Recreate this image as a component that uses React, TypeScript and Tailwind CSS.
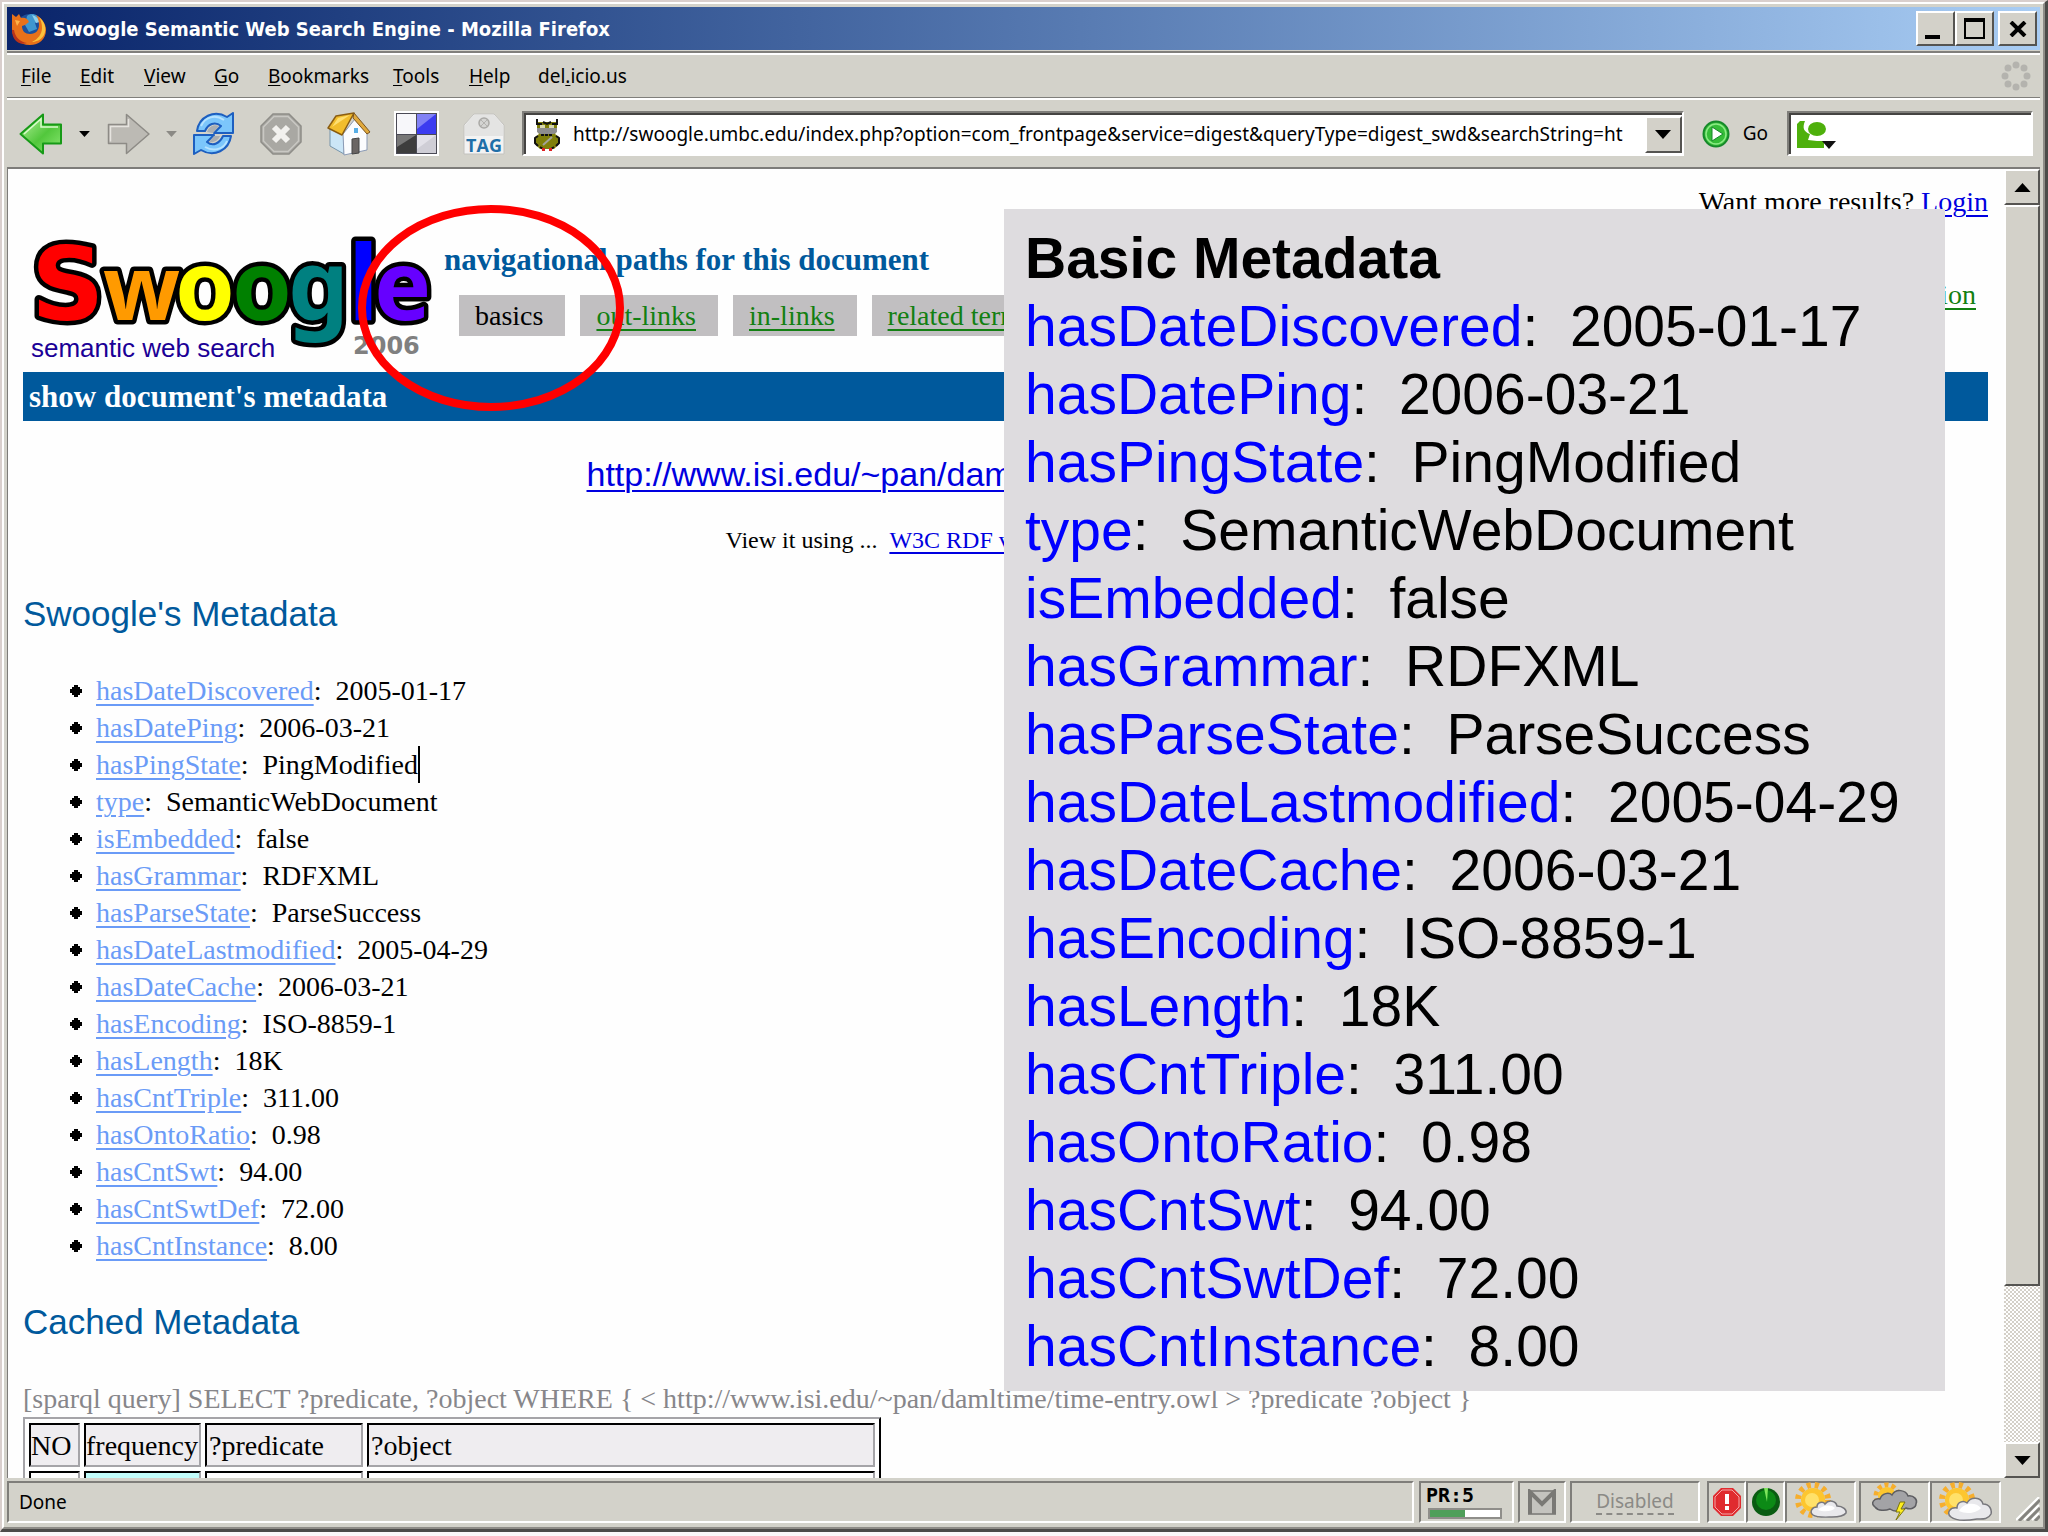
import React from 'react';

const metadata = [
  { name: 'hasDateDiscovered', value: '2005-01-17' },
  { name: 'hasDatePing', value: '2006-03-21' },
  { name: 'hasPingState', value: 'PingModified', caret: true },
  { name: 'type', value: 'SemanticWebDocument' },
  { name: 'isEmbedded', value: 'false' },
  { name: 'hasGrammar', value: 'RDFXML' },
  { name: 'hasParseState', value: 'ParseSuccess' },
  { name: 'hasDateLastmodified', value: '2005-04-29' },
  { name: 'hasDateCache', value: '2006-03-21' },
  { name: 'hasEncoding', value: 'ISO-8859-1' },
  { name: 'hasLength', value: '18K' },
  { name: 'hasCntTriple', value: '311.00' },
  { name: 'hasOntoRatio', value: '0.98' },
  { name: 'hasCntSwt', value: '94.00' },
  { name: 'hasCntSwtDef', value: '72.00' },
  { name: 'hasCntInstance', value: '8.00' },
];

const menus = [
  { before: '', key: 'F', after: 'ile', width: 'w-[59px]' },
  { before: '', key: 'E', after: 'dit', width: 'w-[64px]' },
  { before: '', key: 'V', after: 'iew', width: 'w-[70px]' },
  { before: '', key: 'G', after: 'o', width: 'w-[54px]' },
  { before: '', key: 'B', after: 'ookmarks', width: 'w-[125px]' },
  { before: '', key: 'T', after: 'ools', width: 'w-[76px]' },
  { before: '', key: 'H', after: 'elp', width: 'w-[69px]' },
  { before: 'del', key: '.', after: 'icio.us', width: 'w-[100px]' },
];

const raised =
  'border-2 border-t-white border-l-white border-r-[#555451] border-b-[#555451] bg-[#d3d1c9]';
const sunken =
  'border-2 border-t-[#7f7e7a] border-l-[#7f7e7a] border-r-white border-b-white';

const Arrow = ({ dir, className }: { dir: 'up' | 'down'; className?: string }) => (
  <svg viewBox="0 0 18 10" className={className} aria-hidden="true">
    <path d={dir === 'up' ? 'M0 10 9 0l9 10z' : 'M0 0h18L9 10z'} fill="currentColor" />
  </svg>
);

const FirefoxIcon = () => (
  <svg viewBox="0 0 38 34" className="h-[34px] w-[38px] shrink-0" aria-hidden="true">
    <circle cx="20" cy="16" r="14" fill="#1c4f9c" />
    <path d="M17 4c5-4 11-1 13 3l-5 4 2 6-8 3-4-7z" fill="#3f97cf" />
    <path d="M22 3c4 1 7 4 8 7l-4 1z" fill="#8fd0ea" />
    <path d="M2 2l4 3 3-3 2 4c4-1 7 1 8 4l-4 3-3 1c0 5 3 8 8 8 6 0 9-4 9-9 0-4-1-7-3-10 6 3 10 9 10 15 0 9-7 15-16 15C9 33 2 26 2 17c0-5 0-10 0-15z" fill="#e8711a" />
    <path d="M29 5c6 5 8 12 5 18-3 5-8 7-12 7 6-3 10-8 10-14 0-4-1-8-3-11z" fill="#fbc23c" />
    <path d="M4 18c1 7 6 12 13 13-8 3-15-3-15-13z" fill="#b9331a" />
    <path d="M5 8l5 1-3 5z" fill="#ffb347" />
  </svg>
);

const BackIcon = () => (
  <svg viewBox="0 0 44 42" className="h-[42px] w-[44px]" aria-hidden="true">
    <defs>
      <linearGradient id="back" x1="0" y1="0" x2="1" y2="1">
        <stop offset="0" stopColor="#b9f3a0" />
        <stop offset="0.55" stopColor="#52c73c" />
        <stop offset="1" stopColor="#8be873" />
      </linearGradient>
    </defs>
    <path d="M1.500 21 24 1.500V11.500h18v19H24v10z" fill="url(#back)" stroke="#179a17" strokeWidth="2" strokeLinejoin="round" />
    <path d="M5 21 22 6v8h17" fill="none" stroke="#d9fbcb" strokeWidth="1.500" />
  </svg>
);

const ForwardIcon = () => (
  <svg viewBox="0 0 44 42" className="h-[42px] w-[44px]" aria-hidden="true">
    <path d="M42 21 19.500 1.500V11.500h-18v19h18v10z" fill="#bcbab4" stroke="#8d8b86" strokeWidth="1.500" strokeLinejoin="round" />
    <path d="M3.500 28.500V13.500h18V6" fill="none" stroke="#e6e4df" strokeWidth="1.500" />
  </svg>
);

const ReloadIcon = () => (
  <svg viewBox="0 0 44 44" className="h-11 w-11" aria-hidden="true">
    <path d="M5 19C7 5 22-3 35 5l6-4v20H22l7-7c-6-5-13-2-16 5z" fill="#7cc6fb" stroke="#1d5fc0" strokeWidth="2" strokeLinejoin="round" />
    <path d="M39 24c-2 14-17 22-30 14l-7 4V23h20l-7 7c6 5 13 1 16-6z" fill="#7cc6fb" stroke="#1d5fc0" strokeWidth="2" strokeLinejoin="round" />
    <path d="M9 14c4-9 14-12 23-6M35 29c-3 8-13 11-22 6" fill="none" stroke="#b7e3ff" strokeWidth="2" />
    <path d="M15 20c2-6 7-8 12-6l-6 7zM28 24c-2 5-7 7-11 6l5-6z" fill="#a9aeb3" />
  </svg>
);

const StopIcon = () => (
  <svg viewBox="0 0 42 42" className="h-[42px] w-[42px]" aria-hidden="true">
    <path d="M13 1h16l12 12v16L29 41H13L1 29V13z" fill="#a9a8a3" stroke="#8e8d88" strokeWidth="1.500" />
    <path d="M14 3.500h14L38.500 14v14L28 38.500H14L3.500 28V14z" fill="none" stroke="#c9c8c3" strokeWidth="1.500" />
    <path d="m14 14 14 14m0-14L14 28" stroke="#f2f1ee" strokeWidth="6" />
  </svg>
);

const HomeIcon = () => (
  <svg viewBox="0 0 44 44" className="h-11 w-11" aria-hidden="true">
    <path d="M3 17v17l14 8V20z" fill="#cbe6f7" stroke="#7795ab" />
    <path d="M16 22 28 7l12 14v17l-23 5z" fill="#fbfcfe" stroke="#8b9bb5" />
    <path d="M1 16 9 4l18-3L15 23z" fill="#f2bd2c" stroke="#8a5d13" strokeWidth="1.500" strokeLinejoin="round" />
    <path d="M5 15 11 6l12-3z" fill="#ffdf70" />
    <path d="m27 1 16 19-3 2L26 6z" fill="#e0a93c" stroke="#7b5520" strokeLinejoin="round" />
    <path d="M25 27l7-1v15l-7 1z" fill="#6b6664" stroke="#444" />
    <rect x="27" y="16" width="4" height="5" fill="#57aee6" />
  </svg>
);

const DeliciousIcon = () => (
  <svg viewBox="0 0 45 45" className="h-[45px] w-[45px]" aria-hidden="true">
    <rect width="45" height="45" fill="#fff" />
    <rect x="2" y="2" width="41" height="41" fill="#4a4a55" />
    <rect x="3" y="3" width="19" height="20" fill="#f7f7fa" />
    <rect x="23" y="3" width="19" height="20" fill="#3c3cf0" />
    <path d="M23 3h19L23 18z" fill="#8282f5" />
    <rect x="3" y="24" width="19" height="18" fill="#3d3d3d" />
    <path d="M3 24h19L3 36z" fill="#777" />
    <rect x="23" y="24" width="19" height="18" fill="#cfced6" />
    <path d="M23 24h19L23 38z" fill="#e2e1e8" />
  </svg>
);

const TagIcon = () => (
  <svg viewBox="0 0 42 42" className="h-[42px] w-[42px]" aria-hidden="true">
    <path d="M1 41V12L11 1h20l10 11v29z" fill="#f3f3f3" stroke="#c3c2be" />
    <path d="M2 23V12L11 2h20l9 10v11z" fill="#e4e4e3" />
    <circle cx="21" cy="10" r="5" fill="#d4d4d2" stroke="#aaa9a6" strokeWidth="1.500" />
    <path d="m18 7 6 6m0-6-6 6" stroke="#b3b2af" />
    <text x="21" y="39" textAnchor="middle" fontFamily="Open Sans, sans-serif" fontWeight="700" fontSize="18" fill="#1f6fa8">TAG</text>
  </svg>
);

const OwlIcon = () => (
  <svg viewBox="0 0 26 32" className="h-8 w-[26px] shrink-0" aria-hidden="true">
    <path d="M3 3h20v9l-2 3 4 3v7l-5 5H6l-5-5v-7l4-3-2-3z" fill="#80800a" />
    <path d="M3 0v5h5M23 0v5h-5M9 3l4 2 4-2M4 17l-3 2v5l3 3M22 17l3 2v5l-3 3M6 28l3 2M20 28l-3 2" fill="none" stroke="#111" strokeWidth="2" />
    <path d="M3 9h20v4l-3 2H6l-3-2z" fill="#8d8d8d" />
    <path d="M6 6h5v3H6zM15 6h5v3h-5z" fill="#d8d8b0" />
    <path d="M7 16h12" stroke="#111" strokeWidth="2" strokeDasharray="3 1" />
    <path d="M18 18 9 26" stroke="#a3a39a" strokeWidth="2" />
    <path d="M8 29h3v3H8zM15 29h3v3h-3z" fill="#d22" />
  </svg>
);

const GoIcon = () => (
  <svg viewBox="0 0 28 28" className="h-7 w-7" aria-hidden="true">
    <circle cx="14" cy="14" r="12.500" fill="#35bd38" stroke="#16892a" strokeWidth="2" />
    <circle cx="14" cy="14" r="10" fill="none" stroke="#8ceb86" strokeWidth="1.500" />
    <path d="M10 7v14l11-7z" fill="#fff" stroke="#16892a" />
  </svg>
);

const SearchEngineIcon = () => (
  <svg viewBox="0 0 40 30" className="h-[30px] w-10 shrink-0" aria-hidden="true">
    <path d="M1 4 4 1h5c-3 7-1 11 5 13l-2 6 9 1h7v7H1z" fill="#4eb00c" />
    <ellipse cx="21" cy="9" rx="9" ry="7" fill="#4eb00c" />
    <path d="M26 21h14l-7 8z" fill="#111" />
  </svg>
);

const Throbber = () => (
  <svg viewBox="0 0 30 30" className="h-[30px] w-[30px]" fill="#b4b3ae" aria-hidden="true">
    <circle cx="15" cy="4" r="3.500" />
    <circle cx="23" cy="7" r="3.500" />
    <circle cx="26" cy="15" r="3.500" />
    <circle cx="23" cy="23" r="3.500" />
    <circle cx="15" cy="26" r="3.500" />
    <circle cx="7" cy="23" r="3.500" />
    <circle cx="4" cy="15" r="3.500" />
    <circle cx="7" cy="7" r="3.500" />
  </svg>
);

const Logo = () => (
  <svg viewBox="0 0 415 152" className="h-[152px] w-[415px] shrink-0 overflow-visible" role="img" aria-label="Swoogle semantic web search 2006">
    <g
      fontFamily="Noto Sans, sans-serif"
      fontWeight="700"
      fontSize="96"
      stroke="#000"
      strokeWidth="9"
      strokeLinejoin="round"
      paintOrder="stroke"
    >
      <text x="8" y="100" fontFamily="DejaVu Sans, sans-serif" fontSize="102" fill="#f00">S</text>
      <text x="80" y="100" fontSize="90" fill="#ff9a00">w</text>
      <text x="152" y="100" fill="#ff0">o</text>
      <text x="209" y="100" fill="#008000">o</text>
      <text x="265" y="100" fill="#008080">g</text>
      <text x="325" y="100" fontSize="104" fill="#00f">l</text>
      <text x="351" y="100" fill="#60f">e</text>
    </g>
    <text x="8" y="137" fontFamily="Liberation Sans, sans-serif" fontSize="26" fill="#1b0096">semantic web search</text>
    <text x="330" y="134" fontFamily="DejaVu Sans, sans-serif" fontWeight="700" fontSize="24" fill="#808080">2006</text>
  </svg>
);

const Sun = ({ children, cx }: { children: React.ReactNode; cx: number }) => (
  <svg viewBox="0 0 54 42" className="h-[42px] w-[54px]" aria-hidden="true">
    <circle cx={cx} cy="19" r="15" fill="none" stroke="#f6ae2d" strokeWidth="6" strokeDasharray="4 4" />
    <circle cx={cx} cy="19" r="12" fill="#fdc62f" />
    <circle cx={cx - 1} cy="19" r="7" fill="#ffe169" />
    {children}
  </svg>
);

const TitleBar = () => (
  <header className="flex h-[43px] shrink-0 items-center bg-linear-to-r from-[#0a246a] to-[#a9cdf4] pr-[3px] pl-[3px]">
    <FirefoxIcon />
    <h1 className="ml-[5px] grow font-['DejaVu_Sans_Condensed','DejaVu_Sans',sans-serif] text-[20px] font-bold text-white">
      Swoogle Semantic Web Search Engine - Mozilla Firefox
    </h1>
    <div className="flex">
      <button type="button" aria-label="Minimize" className={`flex h-[35px] w-[39px] items-end pb-[5px] pl-[7px] ${raised}`}>
        <span className="h-1 w-[15px] bg-black" />
      </button>
      <button type="button" aria-label="Maximize" className={`flex h-[35px] w-[39px] items-center justify-center ${raised}`}>
        <span className="h-[21px] w-[21px] border-2 border-t-4 border-black" />
      </button>
      <button type="button" aria-label="Close" className={`ml-1 flex h-[35px] w-[39px] items-center justify-center ${raised}`}>
        <svg viewBox="0 0 18 16" className="h-4 w-[18px]" aria-hidden="true">
          <path d="m2 1 14 14m0-14L2 15" stroke="#000" strokeWidth="4" />
        </svg>
      </button>
    </div>
  </header>
);

const MenuBar = () => (
  <nav className="flex h-[42px] shrink-0 items-center pr-[9px] pl-[14px] text-[19px]">
    {menus.map((menu) => (
      <button key={menu.key} type="button" className={`text-left ${menu.width}`}>
        {menu.before}
        <span className="underline underline-offset-2">{menu.key}</span>
        {menu.after}
      </button>
    ))}
    <span className="ml-auto">
      <Throbber />
    </span>
  </nav>
);

const ToolBar = () => (
  <div className="flex h-[67px] shrink-0 items-center pr-[7px] pl-3">
    <button type="button" aria-label="Back"><BackIcon /></button>
    <button type="button" aria-label="Back history" className="ml-4"><Arrow dir="down" className="h-[6px] w-[11px]" /></button>
    <button type="button" aria-label="Forward" className="ml-[17px]"><ForwardIcon /></button>
    <button type="button" aria-label="Forward history" className="ml-[15px] text-[#8b8a85]"><Arrow dir="down" className="h-[6px] w-[11px]" /></button>
    <button type="button" aria-label="Reload" className="ml-[15px]"><ReloadIcon /></button>
    <button type="button" aria-label="Stop" className="ml-6"><StopIcon /></button>
    <button type="button" aria-label="Home" className="ml-[25px]"><HomeIcon /></button>
    <button type="button" aria-label="del.icio.us" className="ml-[23px]"><DeliciousIcon /></button>
    <button type="button" aria-label="Tag" className="ml-6"><TagIcon /></button>
    <div className={`ml-[17px] flex h-[45px] grow items-center bg-white ${sunken}`}>
      <div className="flex h-full grow items-center border-t-2 border-l-2 border-[#454442] pl-2">
        <OwlIcon />
        <input
          type="text"
          aria-label="Location"
          defaultValue="http://swoogle.umbc.edu/index.php?option=com_frontpage&service=digest&queryType=digest_swd&searchString=ht"
          className="ml-[13px] min-w-0 grow bg-transparent text-[19px] outline-none"
        />
        <button type="button" aria-label="Show history" className={`flex h-[37px] w-[37px] items-center justify-center ${raised}`}>
          <Arrow dir="down" className="h-[9px] w-4" />
        </button>
      </div>
    </div>
    <button type="button" className="ml-[18px] flex items-center gap-[13px] text-[19px]">
      <GoIcon />
      Go
    </button>
    <label className={`ml-[19px] flex h-[45px] w-[246px] items-center bg-white ${sunken}`}>
      <span className="flex h-full grow items-center border-t-2 border-l-2 border-[#454442] pl-[5px]">
        <SearchEngineIcon />
        <input type="text" aria-label="Search" className="w-0 grow bg-transparent text-[19px] outline-none" />
      </span>
    </label>
  </div>
);

const Tab = ({ children }: { children: React.ReactNode }) => (
  <li className="bg-[#c1bfc1] pr-[22px] pl-4 leading-[41px] whitespace-nowrap">{children}</li>
);

const OverlayPanel = () => (
  <aside className="absolute top-10 right-[59px] left-[996px] bg-[#dedcdf] pt-[15px] pb-[11px] pl-[21px] font-['Liberation_Sans',Arial,sans-serif] text-[57px] leading-[68px] whitespace-nowrap">
    <h2 className="font-bold">Basic Metadata</h2>
    {metadata.map((item) => (
      <p key={item.name}>
        <span className="text-[#0000ff]">{item.name}</span>:&nbsp; {item.value}
      </p>
    ))}
  </aside>
);

const Page = () => (
  <main className="relative min-w-0 grow overflow-hidden bg-[#fefefe] pt-[14px] pr-4 pl-[15px] font-['Liberation_Serif','Times_New_Roman',serif] text-[28px] leading-[37px]">
    <p className="text-right">
      Want more results? <a href="#login" className="text-[#0000e0] underline decoration-2 underline-offset-4">Login</a>
    </p>
    <div className="flex">
      <Logo />
      <div className="pt-[22px] pl-[6px]">
        <h2 className="text-[31px] leading-[36px] font-bold text-[#00599c]">navigational paths for this document</h2>
        <ul className="mt-[17px] ml-[15px] flex gap-[15px]">
          <Tab>basics</Tab>
          <Tab><a href="#out" className="text-[#128012] underline decoration-2 underline-offset-4">out-links</a></Tab>
          <Tab><a href="#in" className="text-[#128012] underline decoration-2 underline-offset-4">in-links</a></Tab>
          <Tab><a href="#terms" className="text-[#128012] underline decoration-2 underline-offset-4">related terms</a></Tab>
        </ul>
      </div>
      <a href="#more" className="mt-14 mr-3 ml-auto self-start text-[#128012] underline decoration-2 underline-offset-4">ion</a>
    </div>
    <h2 className="bg-[#00599c] pl-[6px] text-[31px] leading-[49px] font-bold text-white">show document's metadata</h2>
    <div className="mx-auto mt-[29px] w-[838px] font-['Liberation_Sans',Arial,sans-serif] text-[34px] leading-[48px]">
      <a href="#doc" className="text-[#0000e0] underline decoration-2 underline-offset-4">http://www.isi.edu/~pan/damltime/time-entry.owl</a>
    </div>
    <p className="mx-auto mt-[26px] w-[560px] text-[24px] leading-8">
      View it using ... &nbsp;
      <a href="#w3c" className="text-[#0000e0] underline decoration-2 underline-offset-4">W3C RDF validator</a>
    </p>
    <h2 className="mt-[37px] font-['Liberation_Sans',Arial,sans-serif] text-[35px] leading-[42px] text-[#00599c]">Swoogle's Metadata</h2>
    <ul className="mt-[37px] pl-[47px]">
      {metadata.map((item) => (
        <li key={item.name} className="flex items-center">
          <svg viewBox="0 0 12 12" className="mr-[14px] h-3 w-3" aria-hidden="true">
            <path d="M4 0h4v2h2v2h2v4h-2v2H8v2H4v-2H2V8H0V4h2V2h2z" />
          </svg>
          <span className={item.caret ? 'border-r-2 border-black' : ''}>
            <a href={`#${item.name}`} className="text-[#6a9bf7] underline decoration-2 underline-offset-4">{item.name}</a>:&nbsp; {item.value}
          </span>
        </li>
      ))}
    </ul>
    <h2 className="mt-[37px] font-['Liberation_Sans',Arial,sans-serif] text-[35px] leading-[42px] text-[#00599c]">Cached Metadata</h2>
    <p className="mt-[37px] whitespace-nowrap text-[#87868a]">
      [sparql query] SELECT ?predicate, ?object WHERE {'{'} &lt; http://www.isi.edu/~pan/damltime/time-entry.owl &gt; ?predicate ?object {'}'}
    </p>
    <table className="w-[858px] table-fixed border-separate border-spacing-1 border-2 border-t-[#a5a4a8] border-r-black border-b-black border-l-[#a5a4a8]">
      <thead>
        <tr className="bg-[#efedf0] text-left">
          <th className="h-11 w-[51px] border-2 border-t-black border-r-[#a5a4a8] border-b-[#a5a4a8] border-l-black font-normal">NO</th>
          <th className="w-[117px] border-2 border-t-black border-r-[#a5a4a8] border-b-[#a5a4a8] border-l-black font-normal">frequency</th>
          <th className="w-[158px] border-2 border-t-black border-r-[#a5a4a8] border-b-[#a5a4a8] border-l-black pl-[2px] font-normal">?predicate</th>
          <th className="border-2 border-t-black border-r-[#a5a4a8] border-b-[#a5a4a8] border-l-black pl-[2px] font-normal">?object</th>
        </tr>
      </thead>
      <tbody>
        <tr>
          <td className="h-11 border-2 border-t-black border-r-[#a5a4a8] border-b-[#a5a4a8] border-l-black" />
          <td className="border-2 border-t-black border-r-[#a5a4a8] border-b-[#a5a4a8] border-l-black bg-[#c2fdfb]" />
          <td className="border-2 border-t-black border-r-[#a5a4a8] border-b-[#a5a4a8] border-l-black" />
          <td className="border-2 border-t-black border-r-[#a5a4a8] border-b-[#a5a4a8] border-l-black" />
        </tr>
      </tbody>
    </table>
    <svg viewBox="0 0 266 206" className="absolute top-9 left-[350px] h-[206px] w-[266px]" aria-hidden="true">
      <ellipse cx="133" cy="103" rx="129" ry="99" fill="none" stroke="#f00" strokeWidth="8" />
    </svg>
    <OverlayPanel />
  </main>
);

const ScrollBar = () => (
  <div className="flex w-9 shrink-0 flex-col bg-[repeating-conic-gradient(#ffffff_0_25%,#d4d0c8_0_50%)] bg-[length:4px_4px]">
    <button type="button" aria-label="Scroll up" className={`flex h-9 items-center justify-center ${raised}`}>
      <Arrow dir="up" className="h-[9px] w-[17px]" />
    </button>
    <div className={`grow-[1081] ${raised}`} />
    <div className="grow-[157]" />
    <button type="button" aria-label="Scroll down" className={`flex h-9 items-center justify-center ${raised}`}>
      <Arrow dir="down" className="h-[9px] w-[17px]" />
    </button>
  </div>
);

const StatusBar = () => (
  <footer className="flex h-[49px] shrink-0 items-start pt-[3px] text-[19px]">
    <p className={`flex h-[42px] grow items-center pl-[10px] ${sunken}`}>Done</p>
    <div className={`ml-[5px] h-[42px] w-[95px] pl-[5px] ${sunken}`}>
      <p className="font-['DejaVu_Sans_Mono',monospace] text-[20px] leading-6 font-bold">PR:5</p>
      <div className="mt-px ml-[2px] h-[11px] w-[74px] border-2 border-[#8f8e8a] bg-white">
        <div className="h-full w-1/2 bg-[#4f9f5a]" />
      </div>
    </div>
    <div className={`ml-1 flex h-[42px] w-12 items-center justify-center ${sunken}`}>
      <svg viewBox="0 0 30 26" className="h-[26px] w-[30px]" aria-hidden="true">
        <path d="M2 2h26v23H2z" fill="#c4c3be" stroke="#8c8b87" strokeWidth="2" />
        <path d="M3 25V3l12 12L27 3v22" fill="none" stroke="#7a7975" strokeWidth="4" />
      </svg>
    </div>
    <div className={`ml-1 flex h-[42px] w-[130px] items-center justify-center text-[#8b8a86] ${sunken}`}>
      <span className="border-b-2 border-dashed border-[#8b8a86] leading-6">Disabled</span>
    </div>
    <div className={`ml-[7px] flex h-[42px] w-[39px] items-center justify-center ${sunken}`}>
      <svg viewBox="0 0 28 28" className="h-7 w-7" aria-hidden="true">
        <path d="M8 0h12l8 8v12l-8 8H8l-8-8V8z" fill="#e02b2f" />
        <path d="M9 2h10l7 7v10l-7 7H9l-7-7V9z" fill="none" stroke="#f4a6a6" />
        <path d="M12 6h4v10h-4zM12 18h4v4h-4z" fill="#fff" />
      </svg>
    </div>
    <div className={`flex h-[42px] w-[39px] items-center justify-center ${sunken}`}>
      <svg viewBox="0 0 28 28" className="h-7 w-7" aria-hidden="true">
        <circle cx="14" cy="14" r="14" fill="#0a5c12" />
        <circle cx="14" cy="12" r="10" fill="#0c8a16" />
        <path d="M12 0h4l-1 14z" fill="#7ee65c" />
      </svg>
    </div>
    <div className={`flex h-[42px] w-[71px] items-center justify-center ${sunken}`}>
      <Sun cx={19}>
        <path d="M19 34c-4-3-1-8 4-8 0-5 6-6 8-3 4-5 11-3 12 2 6 0 10 4 9 7-3 4-10 4-14 4s-15 1-19-2z" fill="#e9e9ec" stroke="#77777c" strokeWidth="1.500" />
        <path d="M24 29c4-5 13-6 17-2-3 4-12 4-17 2z" fill="#fff" />
      </Sun>
    </div>
    <div className={`ml-[3px] flex h-[42px] w-[71px] items-center justify-center ${sunken}`}>
      <svg viewBox="0 0 54 42" className="h-[42px] w-[54px]" aria-hidden="true">
        <circle cx="19" cy="15" r="11" fill="none" stroke="#f6ae2d" strokeWidth="5" strokeDasharray="4 3" />
        <circle cx="19" cy="15" r="9" fill="#fdc62f" />
        <path d="M7 26c-5-4-1-9 5-8 2-6 9-7 12-4 4-7 14-5 16 1 6-1 10 4 8 8 0 4-6 6-10 4-5 4-12 4-16 1-5 2-12 2-15-2z" fill="#a3a3a6" stroke="#5e5e62" strokeWidth="1.500" />
        <path d="m32 21-4 10h4l-4 8 9-11h-4l4-7z" fill="#ffee1f" stroke="#7b7510" />
      </svg>
    </div>
    <div className={`flex h-[42px] w-[71px] items-center justify-center ${sunken}`}>
      <Sun cx={18}>
        <path d="M12 36c-5-4-1-10 6-9 0-6 6-8 10-5 4-7 14-6 16 1 7 0 9 6 8 10-3 6-9 5-14 5-6 1-20 3-26-2z" fill="#e9e9ec" stroke="#77777c" strokeWidth="1.500" />
        <path d="M20 30c5-9 17-9 22-3-5 6-16 6-22 3z" fill="#fff" />
      </Sun>
    </div>
    <svg viewBox="0 0 24 24" className="mt-4 ml-[15px] h-6 w-6" aria-hidden="true">
      <path d="M0 23 23 0M8 23 23 8M16 23l7-7" stroke="#fff" strokeWidth="2" />
      <path d="M3 24 24 3M11 24l13-13M19 24l5-5" stroke="#84837f" strokeWidth="3" />
    </svg>
  </footer>
);

export default function App() {
  return (
    <div className="h-screen overflow-hidden bg-[#fbf8f9] pb-1 text-black">
      <div className="flex h-full flex-col border-t-2 border-r-[3px] border-b-[3px] border-l-2 border-t-[#d9cfcd] border-r-[#4c4b49] border-b-[#4c4b49] border-l-[#d9cfcd] bg-[#d3d2ca] font-['Noto_Sans',Tahoma,sans-serif]">
        <div className="flex min-h-0 grow flex-col border-2 border-t-white border-r-[#8f8d88] border-b-[#8f8d88] border-l-white pt-[3px] pr-[3px] pl-[3px]">
          <TitleBar />
          <div className="mt-px h-1 shrink-0 border-t-2 border-b-2 border-t-[#807f7b] border-b-white" />
          <MenuBar />
          <div className="h-[3px] shrink-0 border-t border-b-2 border-t-[#807f7b] border-b-white" />
          <ToolBar />
          <div className="flex min-h-0 flex-1 border-t-2 border-l border-[#7d7c79]">
            <Page />
            <ScrollBar />
          </div>
          <StatusBar />
        </div>
      </div>
    </div>
  );
}
